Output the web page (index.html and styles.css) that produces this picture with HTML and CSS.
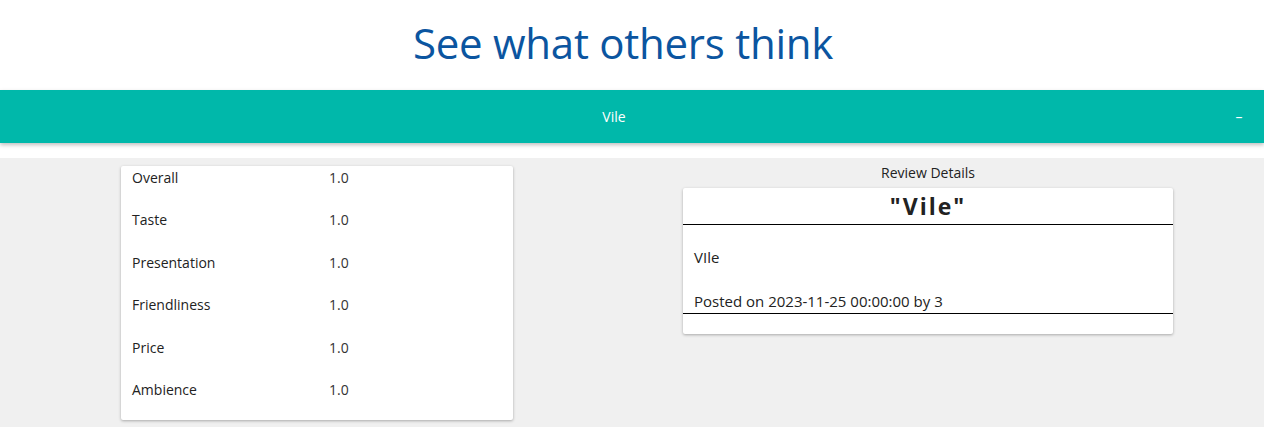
FILE: index.html
```html
<!DOCTYPE html>
<html>
<head>
<meta charset="utf-8">
<link rel="stylesheet" href="styles.css">
</head>
<body>
<h1 class="title">See what others think</h1>
<div class="bar">
  <div class="bar-title">Vile</div>
  <div class="bar-btn">–</div>
</div>
<div class="spacer"></div>
<div class="content">
  <div class="col-left">
    <div class="card ratings">
      <div class="row"><span class="label">Overall</span><span class="value">1.0</span></div>
      <div class="row"><span class="label">Taste</span><span class="value">1.0</span></div>
      <div class="row"><span class="label">Presentation</span><span class="value">1.0</span></div>
      <div class="row"><span class="label">Friendliness</span><span class="value">1.0</span></div>
      <div class="row"><span class="label">Price</span><span class="value">1.0</span></div>
      <div class="row"><span class="label">Ambience</span><span class="value">1.0</span></div>
    </div>
  </div>
  <div class="col-right">
    <div class="section-label">Review Details</div>
    <div class="card review">
      <div class="review-head">"Vile"</div>
      <div class="review-body">
        <p class="review-text">VIle</p>
        <p class="review-meta">Posted on 2023-11-25 00:00:00 by 3</p>
      </div>
    </div>
  </div>
</div>
</body>
</html>
```
FILE: styles.css
```css
* { box-sizing: border-box; }
html, body { margin: 0; padding: 0; }
body {
  font-family: "Open Sans", "Noto Sans", sans-serif;
  color: #222;
  background: #fff;
  height: 427px;
  overflow: hidden;
}
.title {
  margin: 0;
  height: 90px;
  display: flex;
  align-items: center;
  justify-content: center;
  font-weight: 400;
  font-size: 42px;
  color: #0b55a0;
  padding-bottom: 5px;
  padding-right: 18px;
  letter-spacing: -0.25px;
}
.bar {
  height: 53px;
  background: #00b8aa;
  display: flex;
  align-items: center;
  color: #fff;
  box-shadow: 0 2px 4px rgba(0,0,0,0.25);
  position: relative;
  z-index: 1;
}
.bar-title {
  flex: 1;
  text-align: center;
  font-size: 14px;
}
.bar-btn {
  width: 36px;
  text-align: center;
  font-size: 14px;
  padding-right: 14px;
}
.spacer { height: 15px; }
.content {
  background: #f0f0f0;
  display: flex;
  height: 269px;
  padding-top: 8px;
}
.col-left {
  width: 632px;
  padding-left: 121px;
}
.col-right {
  width: 592px;
  display: flex;
  flex-direction: column;
  align-items: center;
  margin-top: -5px;
}
.card {
  background: #fff;
  border-radius: 2px;
  box-shadow: 0 1px 3px rgba(0,0,0,0.3);
}
.ratings {
  width: 392px;
  height: 254px;
  padding: 0 11px;
}
.row {
  display: flex;
  height: 42.4px;
  align-items: flex-start;
  font-size: 14px;
  line-height: 24px;
}
.label { width: 197px; }
.value { color: #333; }
.section-label {
  font-size: 14px;
  line-height: 24px;
  margin-bottom: 3px;
}
.review {
  width: 490px;
  height: 146px;
}
.review-head {
  text-align: center;
  font-weight: 700;
  font-size: 23px;
  letter-spacing: 2px;
  line-height: 36px;
  border-bottom: 1px solid #000;
}
.review-body {
  padding: 0 11px;
  border-bottom: 1px solid #000;
  font-size: 15px;
}
.review-text { margin: 0; padding-top: 19px; line-height: 26px; }
.review-meta { margin: 0; padding-top: 19px; line-height: 24px; }
```
